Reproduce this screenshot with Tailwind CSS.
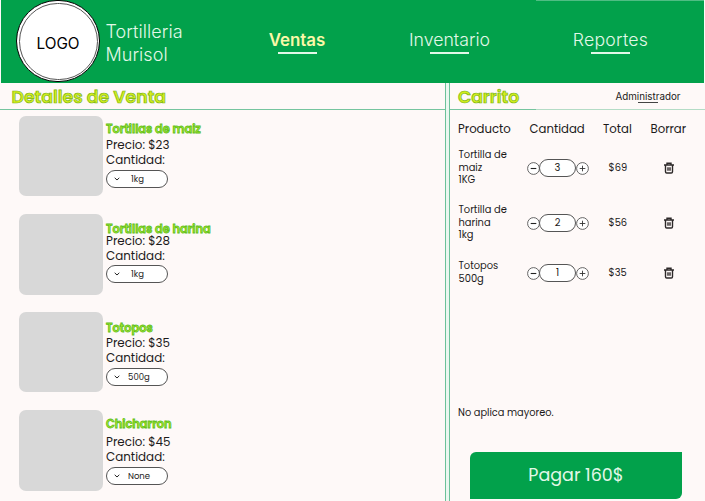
<!DOCTYPE html>
<html lang="es">
<head>
<meta charset="utf-8">
<title>Tortilleria Murisol</title>
<script src="https://cdn.jsdelivr.net/npm/@tailwindcss/browser@4"></script>
</head>
<body class="w-[705px] h-[501px] overflow-hidden bg-[#fef9f8] font-['Poppins','Inter',sans-serif] text-[#1c1a1a] whitespace-nowrap">
<svg class="hidden">
  <symbol id="trash" viewBox="0 0 24 24"><path d="M2 6h20M8 5.500V2.500h8v3M5 6.500V19.500a2.500 2.500 0 0 0 2.500 2.500h9A2.500 2.500 0 0 0 19 19.500V6.500M10 10.500v7M14 10.500v7" fill="none" stroke="#2c2828" stroke-width="2.800"/></symbol>
  <symbol id="minus" viewBox="0 0 13 13"><circle cx="6.500" cy="6.500" r="5.900" fill="#fff" stroke="#555" stroke-width=".9"/><path d="M3.700 6.500h5.600" stroke="#222" stroke-width="1.100"/></symbol>
  <symbol id="plus" viewBox="0 0 13 13"><circle cx="6.500" cy="6.500" r="5.900" fill="#fff" stroke="#555" stroke-width=".9"/><path d="M3.700 6.500h5.600M6.500 3.700v5.600" stroke="#333" stroke-width=".9"/></symbol>
  <symbol id="chev" viewBox="0 0 6 4"><path d="M.7.8 3 3 5.300.8" fill="none" stroke="#222" stroke-width="1"/></symbol>
</svg>
<div class="flex flex-col w-[705px] h-[501px]">
  <header class="flex h-[83px] shrink-0 ml-px mr-px bg-[linear-gradient(#4fbd83,#4fbd83),linear-gradient(#02a14b,#02a14b)] bg-[size:168px_1px,100%_100%] bg-[position:right_top,left_top] bg-no-repeat text-[#e2f8e8]">
    <div class="flex w-[84px] h-[82px] ml-[15px] rounded-full border border-black bg-white p-[1.500px]">
      <div class="flex-1 rounded-full border border-[#555] flex items-center justify-center pt-[6px] text-[15.300px] text-black font-['Inter',sans-serif]"><span>LOGO</span></div>
    </div>
    <div class="w-[168px] pl-[5.500px] pt-[19.500px] text-[18px] leading-[23px] tracking-[0.050px] font-light font-['Inter',sans-serif]">Tortilleria<br>Murisol</div>
    <nav class="flex pt-[29px] font-['Inter',sans-serif] text-[17.700px] font-light leading-[22px]">
      <a class="w-[58px] mr-[81px] flex flex-col items-center font-semibold text-[16.900px] text-[#faf8a8]"><span>Ventas</span><i class="w-[39px] h-[2px] mt-px bg-[#e2f8e8]"></i></a>
      <a class="w-[83px] mr-[81px] ml-px flex flex-col items-center"><span>Inventario</span><i class="w-[39px] h-[2px] mt-px bg-[#e2f8e8]"></i></a>
      <a class="w-[77px] flex flex-col items-center tracking-[0.250px]"><span>Reportes</span><i class="w-[39px] h-[2px] mt-px bg-[#e2f8e8]"></i></a>
    </nav>
  </header>
  <div class="flex flex-1 min-h-0">
    <main class="w-[445px]">
      <h1 class="h-[26px] pl-[11.500px] pt-px leading-[27px] text-[17.300px] font-semibold text-[#d5ee1c] [-webkit-text-stroke:0.700px_#78b414]">Detalles de Venta</h1>
      <div class="h-px bg-[#76c59f]"></div>
      <section class="flex h-[98px] pl-[19px] pt-[6px]">
        <div class="w-[84px] h-[80px] rounded-[7px] bg-[#d8d8d8] mr-[3px]"></div>
        <div class="pt-[5px] text-[11.900px] leading-[15px]">
          <h2 class="h-[17px] leading-[16px] font-semibold text-[11.400px] text-[#b4ee28] [-webkit-text-stroke:0.800px_#5cbe20]">Tortillas de maiz</h2>
          <p>Precio: $23</p><p>Cantidad:</p>
          <div class="mt-[2px] w-[62px] h-[18px] rounded-full border border-[#555] bg-white flex items-center pl-[7px] text-[8.500px]"><svg class="w-[6px] h-[4px]"><use href="#chev"/></svg><span class="w-[35px] text-center">1kg</span></div>
        </div>
      </section>
      <section class="flex h-[98px] pl-[19px] pt-[6px]">
        <div class="w-[84px] h-[81px] rounded-[7px] bg-[#d8d8d8] mr-[3px]"></div>
        <div class="pt-[7px] text-[11.900px] leading-[15px]">
          <h2 class="h-[13px] leading-[16px] font-semibold text-[11.400px] text-[#b4ee28] [-webkit-text-stroke:0.800px_#5cbe20]">Tortillas de harina</h2>
          <p>Precio: $28</p><p>Cantidad:</p>
          <div class="mt-px w-[62px] h-[18px] rounded-full border border-[#555] bg-white flex items-center pl-[7px] text-[8.500px]"><svg class="w-[6px] h-[4px]"><use href="#chev"/></svg><span class="w-[35px] text-center">1kg</span></div>
        </div>
      </section>
      <section class="flex h-[98px] pl-[19px] pt-[6px]">
        <div class="w-[84px] h-[80px] rounded-[7px] bg-[#d8d8d8] mr-[3px]"></div>
        <div class="pt-[8px] text-[11.900px] leading-[15px]">
          <h2 class="h-[16px] leading-[16px] font-semibold text-[11.400px] text-[#b4ee28] [-webkit-text-stroke:0.800px_#5cbe20]">Totopos</h2>
          <p>Precio: $35</p><p>Cantidad:</p>
          <div class="mt-[2px] w-[62px] h-[18px] rounded-full border border-[#555] bg-white flex items-center pl-[7px] text-[8.500px]"><svg class="w-[6px] h-[4px]"><use href="#chev"/></svg><span class="w-[38px] text-center">500g</span></div>
        </div>
      </section>
      <section class="flex h-[97px] pl-[19px] pt-[6px]">
        <div class="w-[84px] h-[81px] rounded-[7px] bg-[#d8d8d8] mr-[3px]"></div>
        <div class="pt-[6px] text-[11.900px] leading-[15px]">
          <h2 class="h-[19px] leading-[16px] font-semibold text-[11.400px] text-[#b4ee28] [-webkit-text-stroke:0.800px_#5cbe20]">Chicharron</h2>
          <p>Precio: $45</p><p>Cantidad:</p>
          <div class="mt-[2px] w-[62px] h-[18px] rounded-full border border-[#555] bg-white flex items-center pl-[7px] text-[8.500px]"><svg class="w-[6px] h-[4px]"><use href="#chev"/></svg><span class="w-[38px] text-center">None</span></div>
        </div>
      </section>
    </main>
    <div class="w-px bg-[#6cc29a]"></div>
    <div class="w-[3px] bg-[#ebf7f0]"></div>
    <div class="w-px bg-[#6cc29a]"></div>
    <aside class="flex-1">
      <div class="flex h-[26px] pl-[8px] leading-[27px]">
        <h1 class="w-[157.500px] pt-px text-[17.200px] font-semibold text-[#d5ee1c] [-webkit-text-stroke:0.700px_#78b414]">Carrito</h1>
        <div class="flex flex-col items-center pt-[8px] font-['Inter',sans-serif] text-[9.800px] leading-[12px]"><span>Administrador</span><i class="w-[20px] h-px bg-[#444] -mt-px"></i></div>
      </div>
      <div class="h-px bg-[linear-gradient(to_right,#76c59f_86px,#b4dcc6_86px)]"></div>
      <div class="grid grid-cols-[71.500px_73.500px_47.500px_50px] pl-[8px] pt-[11px] h-[33px] text-[11.700px] leading-[16px]">
        <span>Producto</span><span>Cantidad</span><span>Total</span><span>Borrar</span>
      </div>
      <div class="grid grid-cols-[68px_82px_54px_12px] items-center pl-[8.500px] h-[50px] text-[9.900px] leading-[12.700px]">
        <p>Tortilla de<br>maiz<br>1KG</p>
        <div class="flex items-center"><svg class="w-[13px] h-[13px]"><use href="#minus"/></svg><span class="w-[37px] h-[18px] -mx-[0.500px] rounded-full border border-[#555] bg-white flex items-center justify-center">3</span><svg class="w-[13px] h-[13px]"><use href="#plus"/></svg></div>
        <span>$69</span><svg class="w-[12px] h-[12px]"><use href="#trash"/></svg>
      </div>
      <div class="grid grid-cols-[68px_82px_54px_12px] items-center pl-[8.500px] h-[60px] text-[9.900px] leading-[12.700px]">
        <p>Tortilla de<br>harina<br>1kg</p>
        <div class="flex items-center"><svg class="w-[13px] h-[13px]"><use href="#minus"/></svg><span class="w-[37px] h-[18px] -mx-[0.500px] rounded-full border border-[#555] bg-white flex items-center justify-center">2</span><svg class="w-[13px] h-[13px]"><use href="#plus"/></svg></div>
        <span>$56</span><svg class="w-[12px] h-[12px]"><use href="#trash"/></svg>
      </div>
      <div class="grid grid-cols-[68px_82px_54px_12px] items-center pl-[8.500px] h-[40px] text-[9.900px] leading-[12.700px]">
        <p>Totopos<br>500g</p>
        <div class="flex items-center"><svg class="w-[13px] h-[13px]"><use href="#minus"/></svg><span class="w-[37px] h-[18px] -mx-[0.500px] rounded-full border border-[#555] bg-white flex items-center justify-center">1</span><svg class="w-[13px] h-[13px]"><use href="#plus"/></svg></div>
        <span>$35</span><svg class="w-[12px] h-[12px]"><use href="#trash"/></svg>
      </div>
      <p class="mt-[113px] pl-[8px] text-[9.800px] leading-[14px]">No aplica mayoreo.</p>
      <button class="block mt-[32px] ml-[20px] w-[212px] h-[47px] rounded-tl-[6px] rounded-br-[6px] bg-[#02a14b] text-[#e2f8e8] text-[17.500px]">Pagar 160$</button>
    </aside>
  </div>
</div>
</body>
</html>
